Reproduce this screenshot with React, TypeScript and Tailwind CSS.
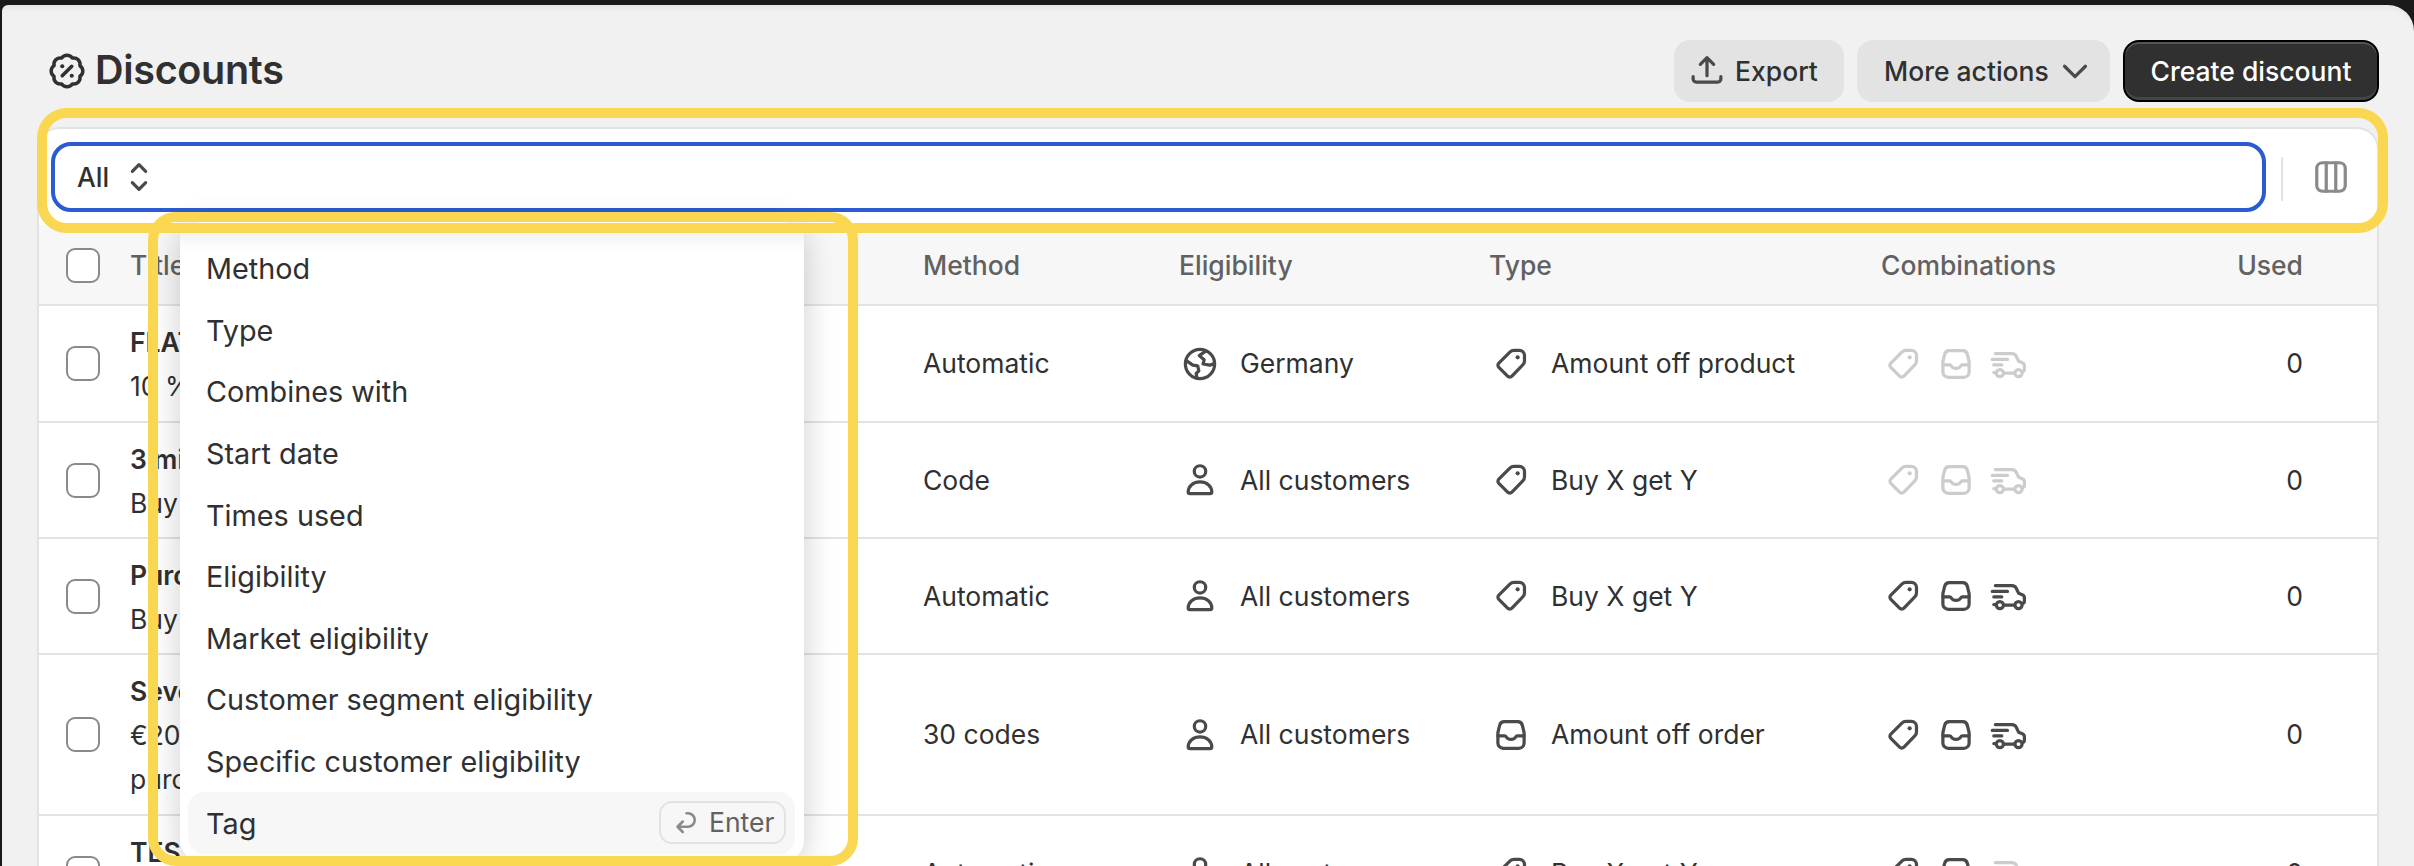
const rows = [
  { h: 'h-[117px]', lines: ['FLAT10', '10 % off'], method: 'Automatic', who: 'globe', whoText: 'Germany', type: 'tag', typeText: 'Amount off product', combo: [false, false, false] },
  { h: 'h-[116px]', lines: ['3 min', 'Buy 1 get 1'], method: 'Code', who: 'person', whoText: 'All customers', type: 'tag', typeText: 'Buy X get Y', combo: [false, false, false] },
  { h: 'h-[116px]', lines: ['Purchase', 'Buy 2 get 1'], method: 'Automatic', who: 'person', whoText: 'All customers', type: 'tag', typeText: 'Buy X get Y', combo: [true, true, true] },
  { h: 'h-[161px]', lines: ['Seven', '€20 off', 'purchases'], method: '30 codes', who: 'person', whoText: 'All customers', type: 'inbox', typeText: 'Amount off order', combo: [true, true, true] },
  { h: 'h-[116px]', lines: ['TEST', 'Buy 1 get 1'], method: 'Automatic', who: 'person', whoText: 'All customers', type: 'tag', typeText: 'Buy X get Y', combo: [true, true, false] },
]

const menuItems = ['Method', 'Type', 'Combines with', 'Start date', 'Times used', 'Eligibility', 'Market eligibility', 'Customer segment eligibility', 'Specific customer eligibility']

function Icon({ children, className = 'text-[#4a4a4a]' }: { children: React.ReactNode; className?: string }) {
  return (
    <svg viewBox="0 0 20 20" fill="none" stroke="currentColor" strokeWidth={1.7} strokeLinecap="round" strokeLinejoin="round" className={`w-[38px] h-[38px] shrink-0 ${className}`}>
      {children}
    </svg>
  )
}

function TagIcon({ className }: { className?: string }) {
  return (
    <Icon className={className}>
      <path d="M11.6 2.800h2.800c1.500 0 2.700 1.200 2.700 2.700v2.800c0 .9-.3 1.600-.9 2.200l-5.700 5.900a1.600 1.600 0 0 1-2.300 0l-4.600-4.600a1.600 1.600 0 0 1 0-2.300l5.800-5.800c.6-.6 1.300-.9 2.200-.9z" />
      <circle cx="13.500" cy="6.500" r="1.100" fill="currentColor" stroke="none" />
    </Icon>
  )
}

function InboxIcon({ className }: { className?: string }) {
  return (
    <Icon className={className}>
      <path d="M6.400 3h7.200c1.200 0 2.100.8 2.400 2l.9 3.800v5.400c0 1.500-1.200 2.800-2.800 2.800H5.900c-1.600 0-2.800-1.300-2.800-2.800V8.800L4 5c.3-1.200 1.200-2 2.400-2z" />
      <path d="M3.100 10.400h3.500c.4 0 .7.2.9.6.4.8 1.300 1.300 2.500 1.300s2.100-.5 2.500-1.300c.2-.4.5-.6.9-.6h3.500" />
    </Icon>
  )
}

function TruckIcon({ className }: { className?: string }) {
  return (
    <Icon className={className}>
      <path d="M2.800 4.500h8.800c1 0 1.800.5 2.200 1.400l1.300 2.700 1.900.8c.7.3 1.100.9 1.100 1.600v1.700c0 .7-.5 1.200-1.200 1.300" />
      <path d="M1.200 7.600h8M2 10.500h4.200M2 14.500h1M7.200 14.800h5.800" />
      <circle cx="5.200" cy="14.800" r="1.900" />
      <circle cx="15" cy="14.800" r="1.900" />
    </Icon>
  )
}

function GlobeIcon() {
  return (
    <Icon>
      <circle cx="10" cy="10" r="7.700" />
      <path d="M13 3.200 9.600 5.600l2.600 2.200-.6 2.200 3.600.6 2.400-.8" />
      <path d="M2.800 8.200l3.400 2.400 2.600.4.6 2.600-1.400 1.400.4 2.600" />
    </Icon>
  )
}

function PersonIcon() {
  return (
    <Icon>
      <circle cx="10" cy="5.500" r="3" />
      <path d="M3.800 16.300c0-3.100 2.700-5.300 6.200-5.300s6.200 2.200 6.200 5.300c0 .5-.4.9-.9.900H4.700c-.5 0-.9-.4-.9-.9z" />
    </Icon>
  )
}

export default function App() {
  return (
    <div className="relative w-[2414px] h-[866px] overflow-hidden bg-[#1a1a1a] font-['Inter',sans-serif] text-[26.5px] text-[#303030]">
      <div className="ml-[2px] mt-[5px] h-[861px] rounded-tr-[26px] rounded-tl-[6px] bg-[#f1f1f1] pl-[35px] pr-[35px] pt-[35px] shadow-[inset_0_6px_6px_-4px_rgba(0,0,0,0.06)]">
        {/* Page header */}
        <div className="flex items-center justify-between h-[62px] pl-[11px]">
          <div className="flex items-center gap-[9px]">
            <svg viewBox="0 0 24 24" fill="none" stroke="currentColor" strokeWidth={2.2} strokeLinecap="round" strokeLinejoin="round" className="w-[38px] h-[38px]">
              <path d="M3.850 8.620a4 4 0 0 1 4.780-4.770 4 4 0 0 1 6.740 0 4 4 0 0 1 4.780 4.780 4 4 0 0 1 0 6.740 4 4 0 0 1-4.770 4.780 4 4 0 0 1-6.750 0 4 4 0 0 1-4.780-4.770 4 4 0 0 1 0-6.760Z" />
              <path d="m15 9-6 6" />
              <circle cx="9" cy="9" r="1.300" fill="currentColor" stroke="none" />
              <circle cx="15" cy="15" r="1.300" fill="currentColor" stroke="none" />
            </svg>
            <h1 className="text-[39.5px] font-semibold tracking-[-0.3px]">Discounts</h1>
          </div>
          <div className="flex items-center gap-[13px] font-medium">
            <button className="flex items-center w-[170px] h-[62px] pl-[14px] gap-[9px] rounded-[16px] bg-[#e3e3e3]">
              <Icon className="text-[#4a4a4a]">
                <path d="M10 12.500V3.200M6.500 6.500 10 3l3.500 3.500" />
                <path d="M2.700 13v1.200c0 .9.700 1.600 1.600 1.600h11.400c.9 0 1.600-.7 1.600-1.600V13" />
              </Icon>
              <span className="pt-[2px]">Export</span>
            </button>
            <button className="flex items-center w-[253px] h-[62px] pl-[27px] gap-[7px] rounded-[16px] bg-[#e3e3e3]">
              <span className="pt-[2px]">More actions</span>
              <Icon className="text-[#4a4a4a]">
                <path d="M4.500 7.500 10 13l5.500-5.500" />
              </Icon>
            </button>
            <button className="flex items-center justify-center w-[256px] h-[62px] pt-[2px] rounded-[16px] bg-[#303030] text-white border-2 border-black shadow-[inset_0_2px_0_rgba(255,255,255,0.18),inset_0_-3px_0_rgba(255,255,255,0.1)]">
              Create discount
            </button>
          </div>
        </div>

        {/* Card */}
        <div className="mt-[25px] bg-white rounded-t-[22px] border-t-2 border-x-2 border-[#e3e3e3]">
          <div className="flex h-[96px] pt-[13px] pl-[12px]">
            <div className="flex items-center w-[2215px] h-[70px] pl-[22px] gap-[11px] rounded-[20px] border-4 border-[#2a5bd0] font-medium">
              <span className="pt-[2px]">All</span>
              <Icon className="text-[#4a4a4a]">
                <path d="M6.500 7 10 3.500 13.500 7M6.500 13l3.500 3.500 3.500-3.500" />
              </Icon>
            </div>
            <div className="ml-[15px] mt-[15px] w-[2px] h-[44px] bg-[#e3e3e3]" />
            <div className="ml-[29px] mt-[16px]">
              <Icon className="text-[#8a8a8a]">
                <rect x="2.500" y="2.500" width="15" height="15" rx="3" />
                <path d="M7.500 2.500v15M12.500 2.500v15" />
              </Icon>
            </div>
          </div>

          {/* Table */}
          <div className="grid grid-cols-[91px_793px_256px_310px_392px_1fr_auto] items-center h-[81px] pt-[2px] pr-[74px] bg-[#f7f7f7] border-b-2 border-[#e3e3e3] font-medium text-[#616161]">
            <span className="pl-[27px]"><span className="block w-[34px] h-[35px] rounded-[9px] border-2 border-[#8a8a8a] bg-white" /></span>
            <span>Title</span>
            <span>Method</span>
            <span>Eligibility</span>
            <span>Type</span>
            <span>Combinations</span>
            <span>Used</span>
          </div>
          {rows.map((row) => (
            <div key={row.lines[0]} className={`grid grid-cols-[91px_793px_256px_310px_392px_1fr_auto] items-center ${row.h} pr-[74px] border-b-2 border-[#e3e3e3]`}>
              <span className="pl-[27px]"><span className="block w-[34px] h-[35px] rounded-[9px] border-2 border-[#8a8a8a] bg-white" /></span>
              <div className="leading-[44px] pt-[1px]">
                {row.lines.map((line, i) => (
                  <div key={line} className={i === 0 ? 'font-semibold' : ''}>{line}</div>
                ))}
              </div>
              <span className="pt-[1px]">{row.method}</span>
              <div className="flex items-center gap-[21px] pl-[2px]">
                {row.who === 'globe' ? <GlobeIcon /> : <PersonIcon />}
                <span className="pt-[1px]">{row.whoText}</span>
              </div>
              <div className="flex items-center gap-[21px] pl-[3px]">
                {row.type === 'tag' ? <TagIcon /> : <InboxIcon />}
                <span className="pt-[1px]">{row.typeText}</span>
              </div>
              <div className="flex items-center gap-[15px] pl-[3px]">
                <TagIcon className={row.combo[0] ? 'text-[#4a4a4a]' : 'text-[#cccccc]'} />
                <InboxIcon className={row.combo[1] ? 'text-[#4a4a4a]' : 'text-[#cccccc]'} />
                <TruckIcon className={row.combo[2] ? 'text-[#4a4a4a]' : 'text-[#cccccc]'} />
              </div>
              <span className="justify-self-end pt-[1px]">0</span>
            </div>
          ))}
        </div>
      </div>

      {/* Filter dropdown */}
      <div className="absolute left-[180px] top-[222px] w-[624px] h-[640px] pt-[16px] rounded-[22px] bg-white text-[28.8px] shadow-[0_4px_32px_rgba(0,0,0,0.2)]">
        <div className="absolute inset-x-0 top-[11px] h-[18px] bg-linear-to-b from-[#f3f3f3] to-white" />
        {menuItems.map((item) => (
          <div key={item} className="relative flex items-center h-[61.6px] pl-[26px]">{item}</div>
        ))}
        <div className="flex items-center justify-between h-[62px] -mt-[0.4px] ml-[8px] mr-[9px] pl-[18px] pr-[9px] rounded-[16px] bg-[#f7f7f7]">
          <span className="pt-[1px]">Tag</span>
          <span className="flex items-center h-[43px] w-[127px] pl-[9px] gap-[9px] rounded-[13px] border-2 border-[#e3e3e3] text-[26.5px] text-[#616161]">
            <svg viewBox="0 0 20 20" fill="none" stroke="currentColor" strokeWidth={1.7} strokeLinecap="round" strokeLinejoin="round" className="w-[30px] h-[30px] text-[#8a8a8a]">
              <path d="M11 3.500h1a4.500 4.500 0 0 1 0 9H5M8.500 9 5 12.500 8.500 16" />
            </svg>
            Enter
          </span>
        </div>
      </div>

      {/* Yellow highlights */}
      <div className="absolute left-[37px] top-[108px] w-[2351px] h-[125px] rounded-[30px] border-[10px] border-[#fad750] pointer-events-none" />
      <div className="absolute left-[148px] top-[212px] w-[710px] h-[654px] rounded-[28px] border-[10px] border-[#fad750] pointer-events-none" />
    </div>
  )
}
